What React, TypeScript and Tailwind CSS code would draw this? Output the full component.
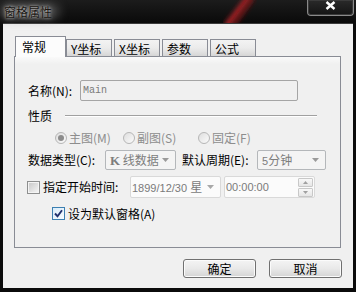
import React from "react";

const tabs = ["Y坐标", "X坐标", "参数", "公式"];

function Arrow({ color = "#9a9a9a" }: { color?: string }) {
  return (
    <svg width="7" height="4" viewBox="0 0 7 4">
      <path d="M0 0H7L3.5 4Z" fill={color} />
    </svg>
  );
}

function Radio({ checked, label }: { checked?: boolean; label: string }) {
  return (
    <div className="flex items-center gap-[2px]">
      <span className="flex h-[12px] w-[12px] items-center justify-center rounded-full border border-[#b6b6b6] bg-linear-to-br from-[#dedede] to-[#fbfbfb]">
        {checked && <span className="h-[6px] w-[6px] rounded-full bg-[#8c8c8c]" />}
      </span>
      <span className="text-[#8d8d8d]">{label}</span>
    </div>
  );
}

function Check({ checked }: { checked?: boolean }) {
  if (checked) {
    return (
      <span className="flex h-[13px] w-[13px] items-center justify-center border border-[#3c7fb1] bg-linear-to-br from-[#d9ecfa] to-[#f6fbff]">
        <svg width="9" height="9" viewBox="0 0 9 9">
          <path d="M1 4.5L3.5 7.2L8 1.2" stroke="#21316e" strokeWidth="1.9" fill="none" />
        </svg>
      </span>
    );
  }
  return (
    <span className="flex h-[13px] w-[13px] items-center justify-center border border-[#8e8f8f] bg-[#f4f4f4]">
      <span className="h-[9px] w-[9px] bg-linear-to-br from-[#cbcbcb] to-[#f3f3f3]" />
    </span>
  );
}

function Select({ value, width }: { value: React.ReactNode; width: string }) {
  return (
    <div
      className={`flex h-[20px] ${width} items-center justify-between rounded-[2px] border border-[#b4b7ba] bg-[#f4f4f4] pl-[4px] pr-[6px] text-[#7d7d7d]`}
    >
      <span>{value}</span>
      <Arrow />
    </div>
  );
}

function Btn({ label }: { label: string }) {
  return (
    <button className="flex h-[19px] w-[73px] items-center justify-center rounded-[3px] border border-[#707070] bg-linear-to-b from-[#f4f4f4] via-[#e9e9e9] to-[#d4d4d4] text-[12px] leading-[14px] text-black shadow-[inset_0_0_0_1px_#fbfbfb]">
      {label}
    </button>
  );
}

export default function App() {
  return (
    <div className="relative flex h-[292px] w-[356px] flex-col overflow-hidden bg-[#0b0b0b] font-['Noto_Sans_CJK_SC',sans-serif] text-[12px] leading-[14px] text-black">
      {/* title bar */}
      <div className="relative flex h-[23px] items-center bg-linear-to-b from-[#1c1c1c] to-[#0a0a0a] pl-[4px]">
        <svg className="absolute left-[200px] top-0" width="80" height="23" viewBox="0 0 80 23">
          <defs>
            <filter id="b">
              <feGaussianBlur stdDeviation="2.5" />
            </filter>
          </defs>
          <path d="M50 -4L26 27" stroke="#b3262c" strokeWidth="6" filter="url(#b)" />
          <path d="M54 -4L32 27" stroke="#6a1418" strokeWidth="4" filter="url(#b)" />
        </svg>
        <span className="absolute left-[0px] top-[3px] h-[17px] w-[60px] rounded-full bg-[#8a8a8a]/40 blur-[5px]" />
        <span className="relative text-[12px] leading-[14px] text-[#1a1612] [text-shadow:0_0_3px_rgba(255,255,255,0.75),0_0_7px_rgba(255,255,255,0.5)]">
          窗格属性
        </span>
        <div className="absolute right-[2px] top-0 flex h-[16px] w-[47px] items-center justify-center rounded-b-[4px] border border-t-0 border-[#8a8a8a] bg-linear-to-b from-[#2a2a2a] to-[#141414] shadow-[inset_0_0_0_1px_#3a3a3a]">
          <svg width="11" height="9" viewBox="0 0 11 9" className="mb-[4px]">
            <path d="M1.5 1L9.5 8M9.5 1L1.5 8" stroke="#ffffff" strokeWidth="2.4" />
          </svg>
        </div>
      </div>

      {/* client area */}
      <div className="ml-[3px] flex h-[265px] w-[350px] flex-col border-t border-[#3c3c3c] bg-[#f0f0f0] pl-[11px] pt-[12px]">
        {/* tabs */}
        <div className="relative z-10 flex h-[20px] items-end gap-[2px] pl-[1px]">
          <div className="-mb-px -mr-[2px] h-[21px] w-[51px] border border-b-0 border-[#898c95] bg-[#fcfcfc] pl-[6px] pt-[3px]">
            常规
          </div>
          {tabs.map((t) => (
            <div
              key={t}
              className="h-[17px] w-[46px] border border-b-0 border-[#898c95] bg-linear-to-b from-[#f3f3f3] via-[#ebebeb] to-[#d6d6d6] pl-[4px] pt-[2px]"
            >
              {t}
            </div>
          ))}
        </div>

        {/* panel */}
        <div className="flex h-[192px] w-[327px] flex-col border border-[#898c95] bg-linear-to-b from-[#fafafa] from-[0px] to-[#f0f0f0] to-[7px] pl-[13px]">
          <div className="mt-[23px] flex h-[21px] items-center">
            <span className="w-[52px]">名称(N):</span>
            <div className="flex h-[21px] w-[218px] items-center rounded-[2px] border border-[#a5a5a5] bg-[#f0f0f0] pl-[2px] font-['Liberation_Mono',monospace] text-[10px] text-[#7a7a7a]">
              Main
            </div>
          </div>

          <div className="mt-[8px] flex h-[14px] items-center">
            <span>性质</span>
            <div className="ml-[13px] w-[252px] border-t border-b border-t-[#a0a0a0] border-b-white" />
          </div>

          <div className="mt-[8px] flex h-[14px] items-center pl-[27px]">
            <div className="w-[68px]">
              <Radio checked label="主图(M)" />
            </div>
            <div className="w-[75px]">
              <Radio label="副图(S)" />
            </div>
            <Radio label="固定(F)" />
          </div>

          <div className="mt-[5px] flex h-[20px] items-center">
            <span className="w-[77px]">数据类型(C):</span>
            <Select
              width="w-[71px]"
              value={
                <>
                  <b className="font-['Liberation_Serif',serif] text-[13px]">K</b> 线数据
                </>
              }
            />
            <span className="ml-[6px] w-[75px]">默认周期(E):</span>
            <Select
              width="w-[69px]"
              value={
                <>
                  <span className="font-['Liberation_Sans',sans-serif] text-[11px]">5</span>分钟
                </>
              }
            />
          </div>

          <div className="-ml-px mt-[6px] flex h-[22px] items-center">
            <Check />
            <span className="ml-[3px] w-[87px]">指定开始时间:</span>
            <div className="flex h-[22px] w-[91px] items-center rounded-[2px] border border-[#d9d9d9] bg-[#fbfbfb] pl-[1px] pr-[6px] text-[#7a7a7a]">
              <span className="whitespace-nowrap">
                <span className="font-['Liberation_Sans',sans-serif] text-[11px]">1899/12/30 </span>星
              </span>
              <span className="ml-auto">
                <Arrow color="#a8a8a8" />
              </span>
            </div>
            <div className="ml-[3px] flex h-[22px] w-[91px] items-center justify-between rounded-[2px] border border-[#d9d9d9] bg-[#fbfbfb] pl-[1px] pr-[1px] font-['Liberation_Sans',sans-serif] text-[11px] text-[#7a7a7a]">
              <span>00:00:00</span>
              <div className="flex flex-col gap-px">
                {[0, 1].map((i) => (
                  <span
                    key={i}
                    className="flex h-[9px] w-[15px] items-center justify-center rounded-[1px] border border-[#c8c8c8] bg-linear-to-b from-[#f8f8f8] to-[#e6e6e6]"
                  >
                    <svg width="5" height="3" viewBox="0 0 5 3" className={i === 1 ? "rotate-180" : ""}>
                      <path d="M0 3H5L2.5 0Z" fill="#a0a0a0" />
                    </svg>
                  </span>
                ))}
              </div>
            </div>
          </div>

          <div className="mt-[9px] flex h-[13px] items-center pl-[24px]">
            <Check checked />
            <span className="ml-[3px]">设为默认窗格(A)</span>
          </div>
        </div>

        {/* buttons */}
        <div className="mt-[11px] flex w-[328px] justify-end gap-[13px]">
          <Btn label="确定" />
          <Btn label="取消" />
        </div>
      </div>
    </div>
  );
}
